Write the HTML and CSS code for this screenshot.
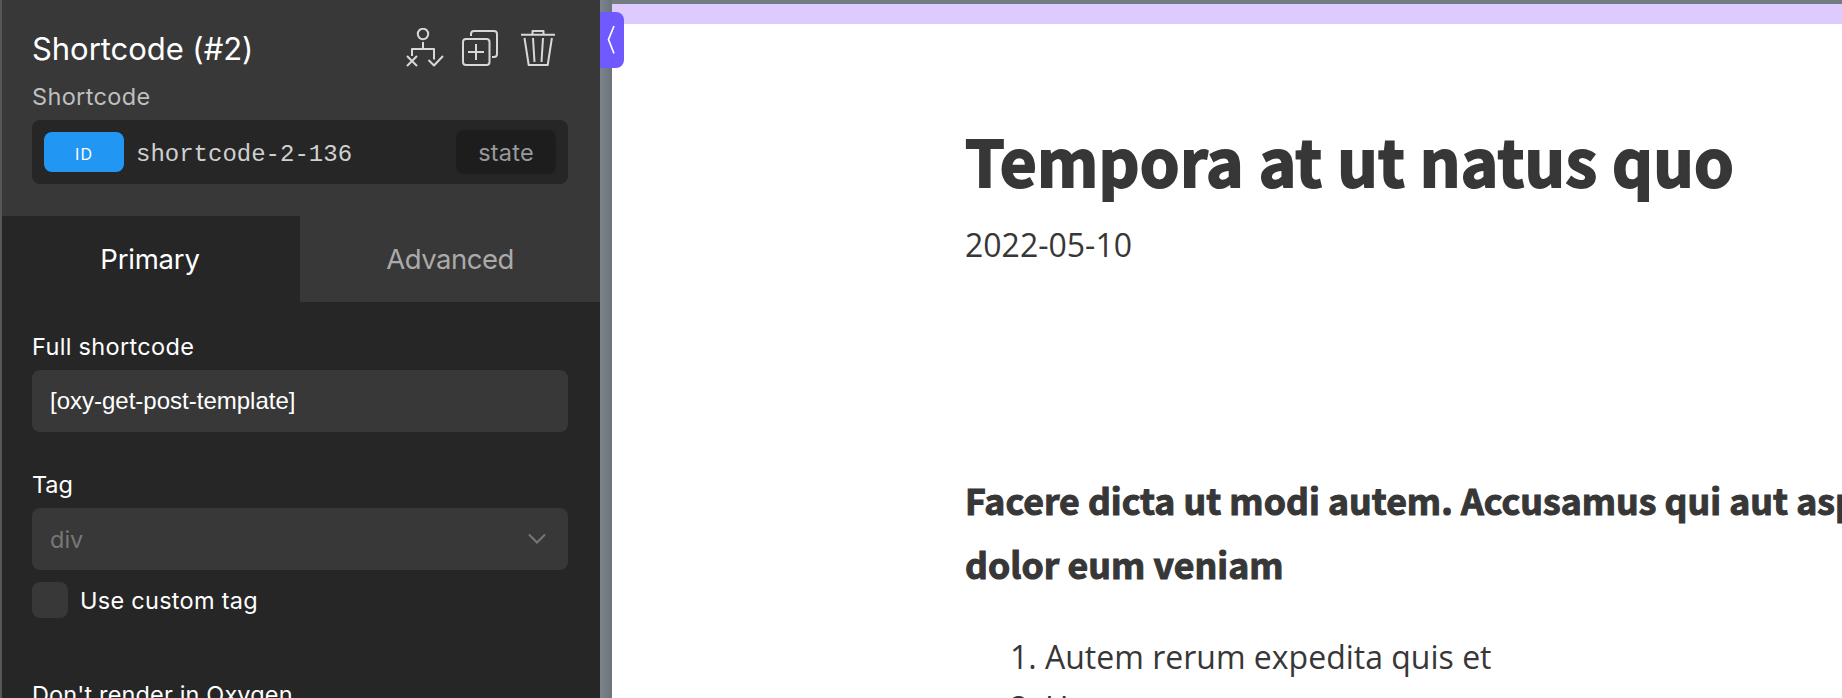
FILE: index.html
```html
<!DOCTYPE html>
<html lang="en">
<head>
<meta charset="utf-8">
<title>Shortcode</title>
<link rel="stylesheet" href="styles.css">
</head>
<body>
<div class="app">
  <aside class="sidebar">
    <header class="head">
      <div class="title-row">
        <h2 class="title">Shortcode (#2)</h2>
        <svg class="tools" width="150" height="40" viewBox="406 28 150 40">
          <g fill="none" stroke="#d8d8d8" stroke-width="2" stroke-linejoin="round">
            <circle cx="423" cy="34" r="5.2"/>
            <path d="M423 42v7M412 56v-7h22v10.500M407 56l10 10M417 56l-10 10M428.500 60l5.500 5.500 9-9.500"/>
            <rect x="463" y="39" width="26.500" height="26" rx="3"/>
            <path d="M471 36v-2a3 3 0 0 1 3-3h20a3 3 0 0 1 3 3v20a3 3 0 0 1-3 3h-2M476 44v16M468 52h16"/>
            <path d="M521 34.700h34M532.500 34v-3h11v3M524.500 38l4.200 27h19l4.200-27M533 38l1.500 24M543 38l-1.500 24"/>
          </g>
        </svg>
      </div>
      <div class="kind">Shortcode</div>
      <div class="selector">
        <span class="badge">ID</span>
        <span class="code">shortcode-2-136</span>
        <span class="state">state</span>
      </div>
    </header>
    <nav class="tabs">
      <span class="tab tab-active">Primary</span>
      <span class="tab">Advanced</span>
    </nav>
    <section class="fields">
      <div class="label label-full">Full shortcode</div>
      <div class="control">[oxy-get-post-template]</div>
      <div class="label label-tag">Tag</div>
      <div class="control select"><span class="value">div</span>
        <svg width="18" height="12" viewBox="0 0 18 12"><path d="M1.500 2l7.500 7.500L16.500 2" fill="none" stroke="#777" stroke-width="2" stroke-linecap="round"/></svg>
      </div>
      <div class="check-row"><span class="checkbox"></span><span class="check-label">Use custom tag</span></div>
      <div class="label label-render">Don't render in Oxygen</div>
    </section>
  </aside>
  <div class="gutter"><div class="handle"><svg width="8" height="30" viewBox="0 0 8 30"><path d="M7 1L1.500 14.500 7 28.500" fill="none" stroke="#fff" stroke-width="1.700"/></svg></div></div>
  <main class="canvas">
    <div class="stripe"></div>
    <article class="post">
      <h1 class="post-title">Tempora at ut natus quo</h1>
      <div class="date">2022-05-10</div>
      <h2 class="subtitle">Facere dicta ut modi autem. Accusamus qui aut asp<br>dolor eum veniam</h2>
      <ol class="list"><li>Autem rerum expedita quis et</li><li>Harum</li></ol>
    </article>
  </main>
</div>
</body>
</html>
```
FILE: styles.css
```css
* { box-sizing: border-box; }
body { margin: 0; height: 698px; overflow: hidden; font-family: Inter, sans-serif; }
.app { display: flex; height: 698px; overflow: hidden; background: #737b83; }
.sidebar { width: 600px; flex: none; background: #262626; border-left: 2px solid #575757; color: #fff; }
.head { height: 216px; padding: 28px 32px 0 30px; background: #383838; }
.title-row { display: flex; justify-content: space-between; height: 40px; padding-right: 12px; }
.title { margin: 0; font-size: 31px; line-height: 42px; font-weight: 400; letter-spacing: -0.05px; white-space: nowrap; }
.tools { flex: none; }
.kind { height: 52px; font-size: 23.5px; line-height: 57px; letter-spacing: 0.35px; color: #bfbfbf; }
.selector { display: flex; align-items: center; height: 64px; padding: 0 12px; border-radius: 8px; background: #262626; }
.badge { width: 80px; height: 40px; border-radius: 8px; background: #2196f3; font-size: 16px; line-height: 44px; text-align: center; letter-spacing: 1px; }
.code { flex: 1; margin-left: 12px; padding-top: 5px; font: 24px/40px "Liberation Mono", monospace; color: #d0d0d0; }
.state { width: 100px; height: 44px; border-radius: 8px; background: #1d1d1d; color: #999; font-size: 23.5px; line-height: 45px; letter-spacing: 0.2px; text-align: center; }
.tabs { display: flex; height: 86px; background: #383838; font-size: 27.5px; line-height: 86px; }
.tab { width: 300px; text-align: center; color: #aaa; letter-spacing: -0.5px; }
.tab-active { width: 298px; padding-right: 2px; background: #262626; color: #fff; letter-spacing: -0.2px; }
.fields { padding: 29px 32px 0 30px; font-size: 23.5px; }
.label { height: 39px; line-height: 32px; letter-spacing: 0.14px; white-space: nowrap; }
.label-full { letter-spacing: 0.33px; }
.control { height: 62px; padding: 0 18px; border-radius: 8px; background: #383838; font: 24px/62px "Liberation Sans", sans-serif; }
.label-tag { margin-top: 37px; letter-spacing: -0.1px; }
.select { display: flex; align-items: center; justify-content: space-between; padding-right: 22px; font: 23.5px/60px Inter, sans-serif; color: #777; }
.value { padding-top: 2px; }
.check-row { display: flex; align-items: center; height: 36px; margin-top: 12px; }
.checkbox { width: 36px; height: 36px; margin-right: 12px; border-radius: 8px; background: #383838; }
.check-label { letter-spacing: 0.27px; }
.label-render { margin-top: 61px; }
.gutter { position: relative; width: 12px; flex: none; background: linear-gradient(90deg, #7b848c, #6c747b); }
.handle { position: absolute; z-index: 1; left: 0; top: 12px; width: 24px; height: 56px; padding: 13px 0 0 7px; border-radius: 0 8px 8px 0; background: #7059ff; }
.handle svg { display: block; }
.canvas { flex: 1; margin-top: 4px; overflow: hidden; background: #fff; color: #373737; }
.stripe { height: 20px; background: #ddcbff; }
.post { width: 1000px; padding: 90px 0 0 353px; font: 32px/51.2px "Open Sans", sans-serif; white-space: nowrap; }
.post-title { margin: 0; font: 700 63.6px/90px "Noto Sans CJK JP", sans-serif; letter-spacing: 0.3px; -webkit-text-stroke: 2px #373737; }
.date { margin-top: 15px; height: 51px; }
.subtitle { margin: 198px 0 0; font: 700 35.6px/64px "Noto Sans CJK JP", sans-serif; letter-spacing: 0.05px; -webkit-text-stroke: 1.1px #373737; }
.list { margin: 35px 0 0; padding-left: 80px; }
```
